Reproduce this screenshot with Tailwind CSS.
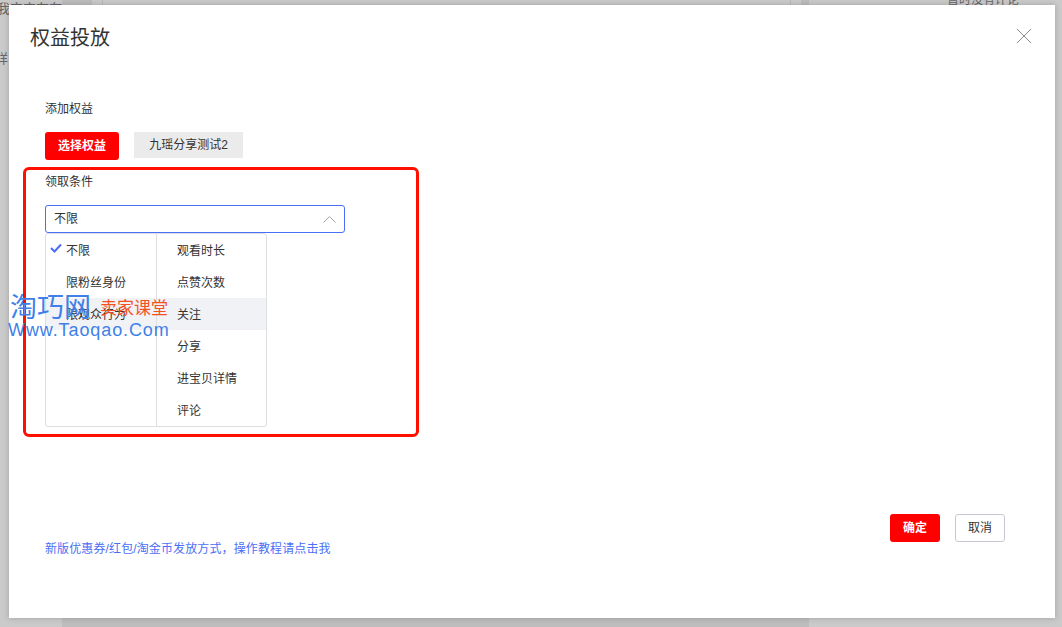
<!DOCTYPE html>
<html lang="zh-CN">
<head>
    <meta charset="UTF-8">
    <title>权益投放</title>
    <script src="https://cdn.jsdelivr.net/npm/@tailwindcss/browser@4"></script>
</head>
<body class="relative w-[1062px] h-[627px] overflow-hidden bg-[#cacaca] text-[#333] font-['Liberation_Sans','Noto_Sans_CJK_SC',sans-serif]">
    <!-- page behind the mask -->
    <div class="absolute inset-0 flex">
        <div class="w-[62px] text-[#666] leading-none">
            <p class="mt-[2px] -ml-[3px] text-[13px] whitespace-nowrap w-[65px] overflow-hidden">我宝宝存在</p>
            <p class="mt-[37px] -ml-[5px] text-[13px]">详</p>
        </div>
        <div class="w-[30px] bg-[#bdbdbd]"></div>
        <div class="w-[10px]"></div>
        <div class="w-[689px] border-x border-[#b8b8b8]"></div>
        <div class="w-[10px]"></div>
        <div class="w-[8px] bg-[#bdbdbd]"></div>
        <div class="flex-1 pl-[138px] text-[12px] leading-none text-[#666]">
            <p class="-mt-[6px]">暂时没有评论</p>
        </div>
    </div>
    <div class="absolute left-[62px] right-[253px] bottom-0 h-[9px] bg-[#bdbdbd]"></div>

    <!-- modal -->
    <div class="absolute left-[9px] top-[5px] w-[1046px] h-[613px] bg-white shadow-[0_0_6px_rgba(0,0,0,0.2)]">
        <div class="flex items-start justify-between pl-[21px] pr-[23px] pt-[19px]">
            <h1 class="text-[20px] leading-[28px] font-normal">权益投放</h1>
            <svg class="mt-[4px]" width="16" height="16" viewBox="0 0 16 16" fill="none" stroke="#8c8c8c" stroke-width="1">
                <path d="M1 1 15 15M15 1 1 15"/>
            </svg>
        </div>

        <div class="pl-[36px] pt-[49px]">
            <p class="text-[12px] leading-[16px]">添加权益</p>
            <div class="flex gap-[15px] mt-[15px]">
                <button class="w-[74px] h-[28px] rounded-[3px] bg-[#ff0000] text-white text-[12px] font-bold">选择权益</button>
                <div class="w-[109px] h-[26px] bg-[#ebebeb] text-[12px] leading-[26px] text-center">九瑶分享测试2</div>
            </div>
            <p class="text-[12px] leading-[16px] mt-[14px]">领取条件</p>

            <div class="mt-[15px] w-[300px] h-[28px] rounded-[3px] border border-[#4c6ef5] flex items-center justify-between pl-[8px] pr-[8px]">
                <span class="text-[12px]">不限</span>
                <svg width="13" height="8" viewBox="0 0 13 8" fill="none" stroke="#a3a3a3" stroke-width="1">
                    <path d="M0.5 7.5 6.5 1.5 12.5 7.5"/>
                </svg>
            </div>

            <!-- cascader panel -->
            <div class="w-[222px] h-[194px] flex rounded-[3px] border border-[#dcdee2] text-[12px]">
                <ul class="w-[111px] border-r border-[#dcdee2]">
                    <li class="h-[32px] flex items-center pl-[20px] pt-[2px] relative">
                        <svg class="absolute left-[4px] top-[9px]" width="12" height="10" viewBox="0 0 12 10" fill="none" stroke="#4c6ef5" stroke-width="2">
                            <path d="M1 5 4.5 8.5 11 1.5"/>
                        </svg>
                        不限
                    </li>
                    <li class="h-[32px] flex items-center pl-[20px] pt-[2px]">限粉丝身份</li>
                    <li class="h-[32px] flex items-center pl-[20px] pt-[2px] bg-[#f1f2f6]">限观众行为</li>
                </ul>
                <ul class="flex-1">
                    <li class="h-[32px] flex items-center pl-[20px] pt-[2px]">观看时长</li>
                    <li class="h-[32px] flex items-center pl-[20px] pt-[2px]">点赞次数</li>
                    <li class="h-[32px] flex items-center pl-[20px] pt-[2px] bg-[#f1f2f6]">关注</li>
                    <li class="h-[32px] flex items-center pl-[20px] pt-[2px]">分享</li>
                    <li class="h-[32px] flex items-center pl-[20px] pt-[2px]">进宝贝详情</li>
                    <li class="h-[32px] flex items-center pl-[20px] pt-[2px]">评论</li>
                </ul>
            </div>
        </div>

        <div class="absolute left-[36px] right-[50px] top-[509px] flex items-start justify-between">
            <a class="mt-[27px] text-[12px] leading-[16px] tracking-[0.12px] text-[#4c6ef5]">新版优惠券/红包/淘金币发放方式，操作教程请点击我</a>
            <div class="flex gap-[15px]">
                <button class="w-[50px] h-[28px] rounded-[3px] bg-[#ff0000] text-white text-[12px] font-bold">确定</button>
                <button class="w-[50px] h-[28px] rounded-[3px] border border-[#c5c8d2] text-[#333] text-[12px]">取消</button>
            </div>
        </div>
    </div>

    <!-- red annotation box -->
    <div class="absolute left-[23px] top-[167px] w-[396px] h-[270px] rounded-[6px] border-[3px] border-[#ff0f00]"></div>

    <!-- watermark -->
    <div class="absolute left-[8px] top-[289px] w-[170px] h-[52px]">
        <span class="absolute left-[2px] top-0 text-[27px] leading-[34px] text-[#3f7fe8] font-['Noto_Sans_CJK_SC',sans-serif] font-normal whitespace-nowrap">淘巧网</span>
        <span class="absolute left-[92px] top-[7px] text-[17px] leading-[22px] text-[#f4511e] font-normal font-['Noto_Sans_CJK_SC',sans-serif] whitespace-nowrap">卖家课堂</span>
        <span class="absolute left-0 top-[30px] text-[18px] leading-[22px] tracking-[0.9px] text-[#3f7fe8] whitespace-nowrap">Www.Taoqao.Com</span>
    </div>
</body>
</html>
